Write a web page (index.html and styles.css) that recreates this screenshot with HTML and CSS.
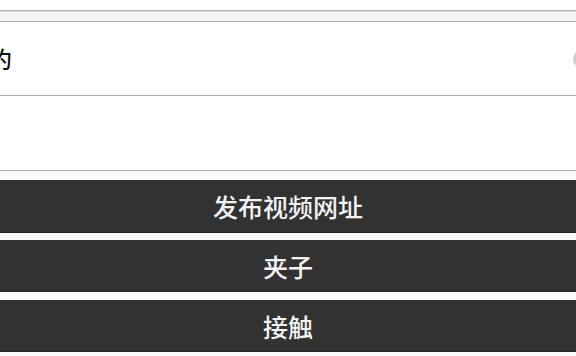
FILE: index.html
```html
<!DOCTYPE html>
<html lang="zh">
<head>
<meta charset="utf-8">
<link rel="stylesheet" href="styles.css">
</head>
<body>
<div class="page">
  <div class="top-space"></div>
  <div class="strip"></div>
  <div class="field">
    <span class="field-text">约</span>
    <span class="clear-icon"></span>
  </div>
  <div class="textarea"></div>
  <div class="actions">
    <div class="btn btn-first">发布视频网址</div>
    <div class="btn">夹子</div>
    <div class="btn">接触</div>
  </div>
</div>
</body>
</html>
```

FILE: styles.css
```css
html, body {
  margin: 0;
  padding: 0;
  background: #ffffff;
}
body {
  width: 576px;
  height: 356px;
  overflow: hidden;
  font-family: "Noto Sans CJK SC", "Noto Sans", sans-serif;
}
.page {
  display: flex;
  flex-direction: column;
  height: 356px;
  background: #f7f7f7;
}
.top-space {
  height: 10px;
  background: #ffffff;
}
.strip {
  height: 10px;
  background: #f5f5f5;
  border-top: 1px solid #b0b0b0;
  border-bottom: 1px solid #b0b0b0;
  box-shadow: inset 0 1px 0 #e2e2e2;
}
.field {
  height: 73px;
  background: #ffffff;
  border-bottom: 1px solid #b0b0b0;
  display: flex;
  align-items: center;
  justify-content: space-between;
  overflow: hidden;
}
.field-text {
  margin-left: -11px;
  font-size: 23px;
  font-weight: 500;
  color: #111;
  line-height: 1;
}
.clear-icon {
  width: 20px;
  height: 20px;
  border-radius: 50%;
  background: #cfcfcf;
  margin-right: -17px;
}
.textarea {
  height: 74px;
  background: #ffffff;
  border-bottom: 1px solid #b0b0b0;
}
.actions {
  padding-top: 9px;
  display: flex;
  flex-direction: column;
  gap: 8px;
  background: #fafafa;
  flex: 1;
}
.btn {
  height: 52px;
  background: #323232;
  color: #f2f2f2;
  font-size: 25px;
  font-weight: 500;
  display: flex;
  align-items: center;
  justify-content: center;
  border-bottom: 1px solid #262626;
  box-sizing: border-box;
}
.btn-first {
  height: 53px;
  margin-bottom: -1px;
}
```
